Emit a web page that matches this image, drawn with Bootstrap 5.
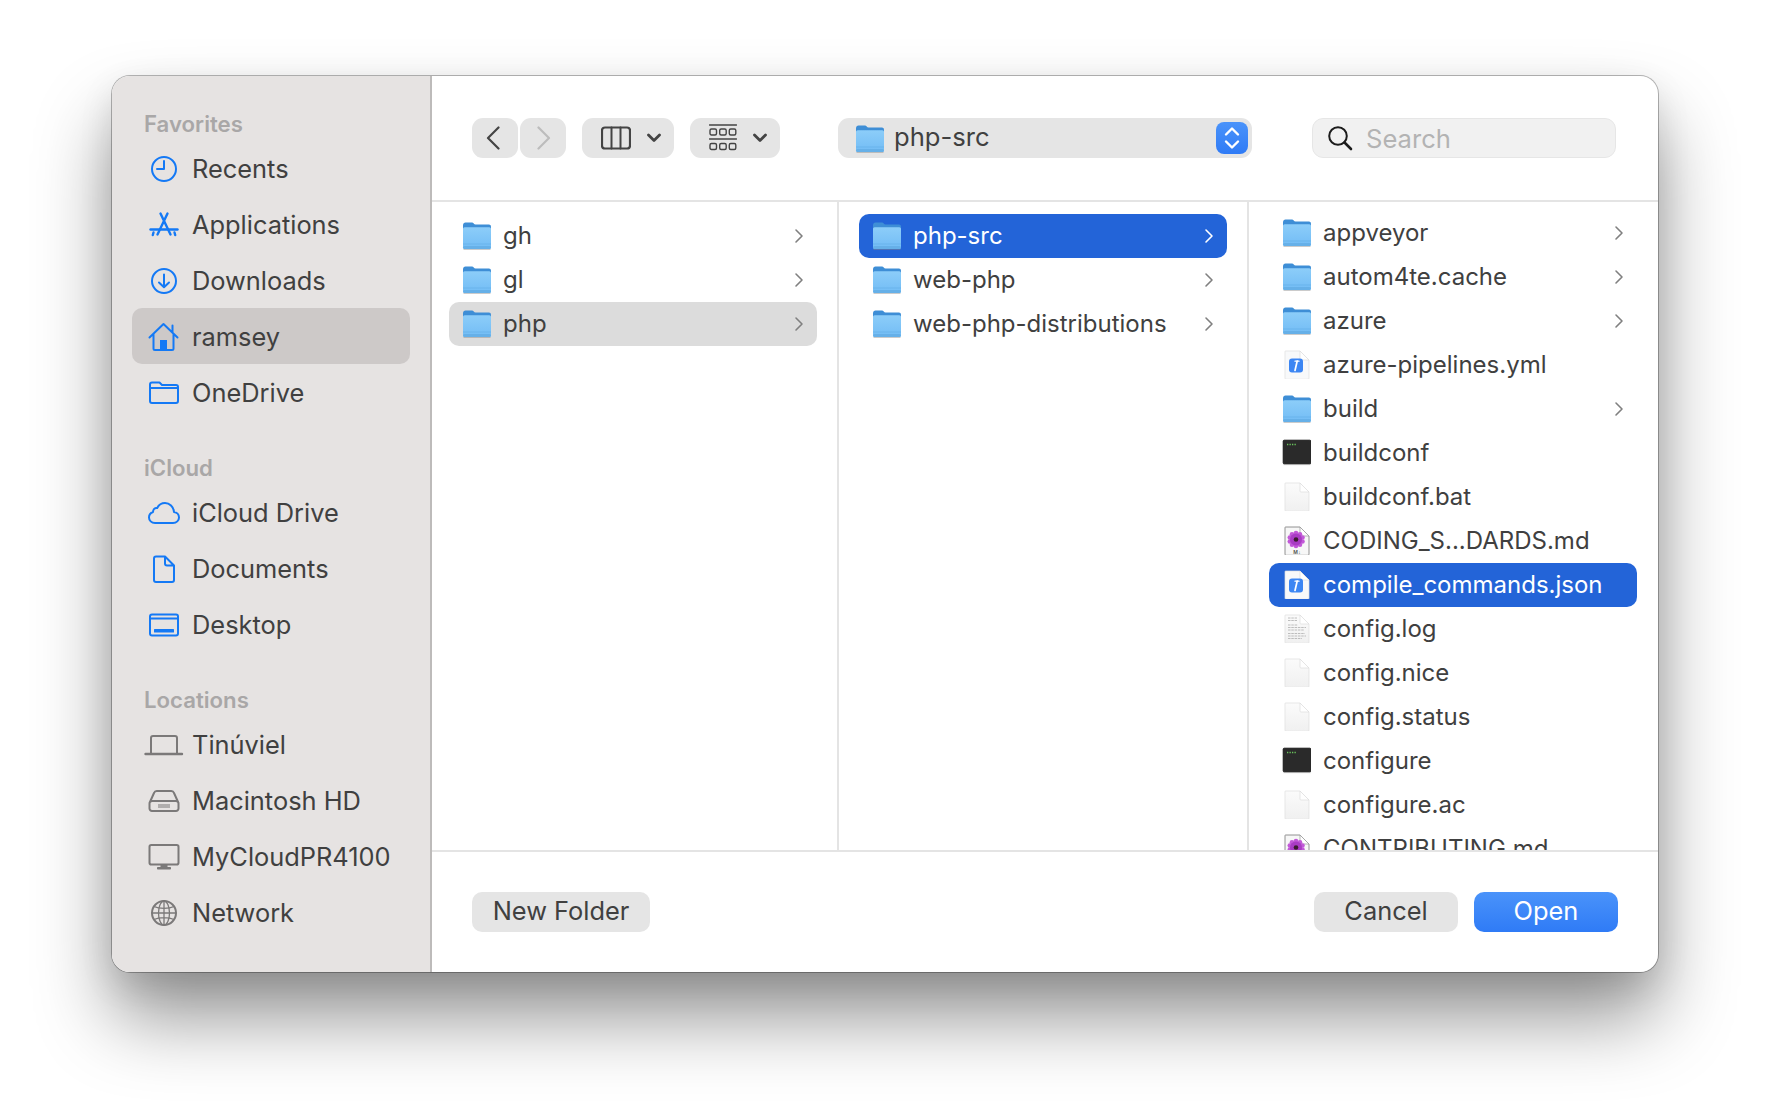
<!DOCTYPE html>
<html lang="en">
<head>
<meta charset="utf-8">
<title>Open dialog</title>
<link href="https://cdn.jsdelivr.net/npm/bootstrap@5.3.0/dist/css/bootstrap.min.css" rel="stylesheet">
<style>
html,body{height:100%;}
body{background:#fff;font-family:Inter,"Liberation Sans",sans-serif;font-size:24px;color:#404040;margin:0;padding:76px 0 0 112px;overflow:hidden;}
.dlg{width:1546px;height:896px;border-radius:18px;overflow:hidden;background:#fff;box-shadow:0 0 0 1px rgba(0,0,0,.28);}
.dlg-wrap{width:1546px;height:896px;border-radius:18px;box-shadow:0 46px 76px rgba(0,0,0,.42),0 12px 34px rgba(0,0,0,.10);}
.side{width:320px;flex:none;background:#e6e3e2;border-right:2px solid #bdbbba;padding:31px 20px 0 20px;font-size:25.4px;}
.side-head{height:34px;line-height:34px;font-size:22.2px;font-weight:600;color:#a9a7a7;padding-left:12px;}
.side-group{margin-bottom:30px;}
.side-item{height:56px;padding:0 0 0 16px;border-radius:10px;}
.side-item.on{background:#cdc9c8;margin-top:-1px;margin-bottom:1px;padding-top:2px;}
.side-item svg{width:32px;height:32px;flex:none;margin:0 12px 0 0;overflow:visible;}
.bl{fill:none;stroke:#1479f5;stroke-width:2;stroke-linecap:round;stroke-linejoin:round;}
.gy{fill:none;stroke:#7b7979;stroke-width:2;stroke-linecap:round;stroke-linejoin:round;}
.blf{fill:#1479f5;}
.gyf{fill:#7b7979;}
.bl.sw24,.gy.sw24{stroke-width:2.4;}
.gy.sw14{stroke-width:1.3;}
.gy.sw1{stroke-width:1;stroke-linecap:butt;}
.bar{height:126px;flex:none;border-bottom:2px solid #e4e4e4;padding:42px 0 0 40px;font-size:25.6px;}
.tbtn{height:40px;background:#e5e5e5;border-radius:11px;flex:none;}
.tbtn svg{flex:none;}
.w46{width:46px;}
.back{padding-right:4px!important;}
.fwd{margin-left:2px;padding-left:2px!important;}
.w92{width:92px;margin-left:16px;padding-left:19px!important;}
.w90{width:90px;margin-left:16px;padding-left:19px!important;}
.pop{width:414px;margin-left:58px;padding-left:17px;padding-right:4px;}
.pop-name{margin-left:10px;margin-bottom:2px;}
.step{width:32px;height:32px;border-radius:8px;background:linear-gradient(#4a93fa,#2f7bf6);margin-left:auto;}
.find{width:304px;height:40px;margin-left:60px;background:#f1f1f1;border:1px solid #e6e6e6;border-radius:11px;padding-left:14px;color:#b3b3b3;}
.find svg{margin-right:13px;flex:none;}
.find span{margin-top:3px;}
.panes{min-height:0;}
.pane{height:100%;overflow:hidden;border-right:2px solid #e4e4e4;flex:none;}
.p1{width:407px;padding:12px 20px 0 17px;}
.p2{width:410px;padding:12px 20px 0 20px;}
.p3{width:409px;padding:9px 21px 0 20px;border-right:0;}
.row-it{height:44px;border-radius:10px;padding:0 13px 1px 13px;white-space:nowrap;}
.row-it .ic{width:29px;height:29px;flex:none;margin-right:12px;overflow:visible;}
.row-it .cv{width:10px;height:16px;flex:none;margin-left:auto;fill:none;stroke:#808080;stroke-width:1.6;stroke-linecap:round;stroke-linejoin:round;}
.row-it.gray{background:#dcdcdc;}
.row-it.sel{background:#2364d8;color:#fff;}
.row-it.sel .cv{stroke:#fff;}
.foot{height:122px;flex:none;border-top:2px solid #e4e4e4;padding:40px 40px 0 40px;}
.fbtn{height:40px;width:144px;border-radius:10px;background:#e5e5e5;color:#404040;font-size:25.4px;line-height:36px;padding-bottom:2px!important;}
.fbtn.wide{width:178px;}
.fbtn.go{background:linear-gradient(#4a93fa,#2f7bf6);color:#fff;margin-left:16px;}
.tick{fill:none;stroke:#444;stroke-width:2.2;stroke-linecap:round;stroke-linejoin:round;}
.tick.off{stroke:#bcbcbc;}
.tick.thin{stroke-width:1.4;}
.tick.mid{stroke-width:2;}
.tick.fat{stroke-width:2.8;}
</style>
</head>
<body>
<svg width="0" height="0" class="position-absolute">
<defs>
<linearGradient id="fb" x1="0" y1="0" x2="0" y2="1"><stop offset="0" stop-color="#8ccdf9"/><stop offset="1" stop-color="#72bcf5"/></linearGradient>
<linearGradient id="pg" x1="0" y1="0" x2="0" y2="1"><stop offset="0" stop-color="#fbfbfb"/><stop offset="1" stop-color="#f0f0f0"/></linearGradient>
<symbol id="folder" viewBox="0 1 29 29">
<path d="M1 5.500C1 3.500 2 2.500 3.500 2.500H10C11.500 2.500 12 4.500 13.500 4.500H27C28 4.500 29 5.200 29 7V14H1Z" fill="#3e8ed6"/>
<path d="M1 9C1 8 1.700 7.300 2.700 7.300H27.300C28.300 7.300 29 8 29 9V26.800C29 28.200 28.200 29 27 29H3C1.800 29 1 28.200 1 26.800Z" fill="url(#fb)"/>
<rect x="1" y="23.500" width="28" height="1" fill="#62aee6" opacity=".6"/>
<rect x="1" y="26" width="28" height="3" rx="1.500" fill="#66b0e8"/>
<rect x="1.500" y="29" width="27" height=".8" fill="#8a8a8a" opacity=".55"/>
</symbol>
<symbol id="page" viewBox="0 -.5 29 29">
<path d="M3.500 .5H18L27 9.500V27.500C27 28.300 26.500 28.800 25.500 28.800H4.500C3.500 28.800 3 28.300 3 27.500V1C3 .7 3.200 .5 3.500 .5Z" fill="url(#pg)" stroke="#dedede" stroke-width=".7"/>
<path d="M18 .5V8.500C18 9.200 18.400 9.500 19 9.500H27Z" fill="#fff" stroke="#dcdcdc" stroke-width=".7"/>
</symbol>
<symbol id="bluefile" viewBox="0 -.5 29 29">
<path d="M3.500 .5H18L27 9.500V27.500C27 28.300 26.500 28.800 25.500 28.800H4.500C3.500 28.800 3 28.300 3 27.500V1C3 .7 3.200 .5 3.500 .5Z" fill="#f8f9fa" stroke="#dedede" stroke-width=".7"/>
<path d="M18 .5V8.500C18 9.200 18.400 9.500 19 9.500H27Z" fill="#fff" stroke="#dcdcdc" stroke-width=".7"/>
<rect x="7" y="8" width="14" height="14" rx="3" fill="#3c86f3"/>
<path d="M15.200 10.500 13 20" stroke="#fff" stroke-width="1.700" fill="none" stroke-linecap="round"/>
<path d="M13 10.700H17" stroke="#fff" stroke-width="1.300" fill="none" stroke-linecap="round"/>
</symbol>
<symbol id="term" viewBox="-.5 -.5 29 29">
<rect x=".7" y="1.700" width="27.600" height="23.600" rx="1" fill="#2a2a2a" stroke="#111" stroke-width=".9"/>
<path d="M4.500 6H5.800M7 6H8.300M9.500 6H10.800M12 6H13.300" stroke="#6ac35c" stroke-width="1.500"/>
<rect x="1" y="25.700" width="27" height=".9" fill="#9a9a9a" opacity=".7"/>
</symbol>
<symbol id="mdfile" viewBox="0 -.5 29 29">
<path d="M3.500 .5H18L27 9.500V27.500C27 28.300 26.500 28.800 25.500 28.800H4.500C3.500 28.800 3 28.300 3 27.500V1C3 .7 3.200 .5 3.500 .5Z" fill="#f7f7f7" stroke="#777" stroke-width=".8"/>
<path d="M18 .5V8.500C18 9.200 18.400 9.500 19 9.500H27Z" fill="#fff" stroke="#999" stroke-width=".7"/>
<g fill="#c258d8">
<circle cx="14" cy="6.500" r="2.300"/><circle cx="18" cy="7.700" r="2.300"/><circle cx="20.500" cy="11" r="2.300"/><circle cx="20.500" cy="15" r="2.300"/><circle cx="18" cy="18.300" r="2.300"/><circle cx="14" cy="19.500" r="2.300"/><circle cx="10" cy="18.300" r="2.300"/><circle cx="7.800" cy="15" r="2.300"/><circle cx="7.800" cy="11" r="2.300"/><circle cx="10" cy="7.700" r="2.300"/>
</g>
<circle cx="14" cy="13" r="6" fill="#a93cc4"/>
<circle cx="14" cy="13" r="2.300" fill="#3b1c2e"/>
<text x="15" y="27" font-family="Liberation Sans,sans-serif" font-size="5.500" font-weight="700" fill="#555" text-anchor="middle">M↓</text>
</symbol>
<symbol id="logfile" viewBox="0 -.5 29 29">
<path d="M3.500 .5H18L27 9.500V27.500C27 28.300 26.500 28.800 25.500 28.800H4.500C3.500 28.800 3 28.300 3 27.500V1C3 .7 3.200 .5 3.500 .5Z" fill="url(#pg)" stroke="#dedede" stroke-width=".7"/>
<path d="M18 .5V8.500C18 9.200 18.400 9.500 19 9.500H27Z" fill="#fff" stroke="#dcdcdc" stroke-width=".7"/>
<path d="M6 3.500H15M6 6H15M6 10.500H16M6 13H24M6 15.500H22M6 19H23M6 21.500H24M6 24H20" stroke="#bdbdbd" stroke-width="1.100" stroke-dasharray="2.500 .8"/>
</symbol>
<symbol id="chev" viewBox="0 0 10 16"><path d="M2 2 8 8 2 14"/></symbol>
</defs>
</svg>

<div class="dlg-wrap">
<div class="dlg d-flex">
  <aside class="side">
    <div class="side-group">
      <div class="side-head">Favorites</div>
      <div class="side-item d-flex align-items-center"><svg viewBox="0 0 32 32"><circle class="bl" cx="16" cy="16" r="12"/><path class="bl" d="M16 8V16H9"/></svg>Recents</div>
      <div class="side-item d-flex align-items-center"><svg viewBox="0 0 32 32"><path class="bl sw24" d="M19.500 4.500 9.500 25.500M12.500 4.500 22.500 25.500"/><path class="bl sw24" d="M2.500 20.500H29.500"/><path class="bl sw24" d="M5.500 23.500 4.800 26M26.500 23.500 27.200 26"/></svg>Applications</div>
      <div class="side-item d-flex align-items-center"><svg viewBox="0 0 32 32"><circle class="bl" cx="16" cy="16" r="12"/><path class="bl" d="M16 9.500V22M11 17.500 16 22.300 21 17.500"/></svg>Downloads</div>
      <div class="side-item on d-flex align-items-center"><svg viewBox="0 0 32 32"><path class="bl" d="M1.500 16.500 15.500 3 29.500 16.500M24.500 4.500V11.500M5.500 13.500V27.500A1.500 1.500 0 0 0 7 29H24A1.500 1.500 0 0 0 25.500 27.500V13.500"/><rect class="blf" x="12" y="19" width="7" height="10"/></svg>ramsey</div>
      <div class="side-item d-flex align-items-center"><svg viewBox="0 0 32 32"><path class="bl" d="M2 8V24A2 2 0 0 0 4 26H28A2 2 0 0 0 30 24V10A2 2 0 0 0 28 8H14L11.500 5.500H4A2 2 0 0 0 2 7.500ZM2 11H30"/></svg>OneDrive</div>
    </div>
    <div class="side-group">
      <div class="side-head">iCloud</div>
      <div class="side-item d-flex align-items-center"><svg viewBox="0 0 32 32"><path class="bl" d="M7 26H25C28.500 26 31 23.500 31 20.500C31 17.500 28.800 15.300 26 15C25.500 9.500 21.500 6 17 6C13.500 6 10.700 8 9.200 11C6.800 10.500 5 12.500 5 15C2.800 15.800 1 17.800 1 20.500C1 23.500 3.500 26 7 26Z"/></svg>iCloud Drive</div>
      <div class="side-item d-flex align-items-center"><svg viewBox="0 0 32 32"><path class="bl" d="M8 3.500H17L26 12.500V27A2 2 0 0 1 24 29H8A2 2 0 0 1 6 27V5.500A2 2 0 0 1 8 3.500ZM17 3.500V10.500A2 2 0 0 0 19 12.500H26"/></svg>Documents</div>
      <div class="side-item d-flex align-items-center"><svg viewBox="0 0 32 32"><rect class="bl" x="2" y="5.500" width="28" height="21" rx="2"/><path class="bl" d="M2 9.500H30"/><rect class="blf" x="6" y="20" width="20" height="3.500" rx=".5"/></svg>Desktop</div>
    </div>
    <div class="side-group">
      <div class="side-head">Locations</div>
      <div class="side-item d-flex align-items-center"><svg viewBox="0 0 32 32"><path class="gy" d="M3 24V9A2 2 0 0 1 5 7H27A2 2 0 0 1 29 9V24"/><path class="gy sw24" d="M-2.500 25H34"/></svg>Tinúviel</div>
      <div class="side-item d-flex align-items-center"><svg viewBox="0 0 32 32"><path class="gy" d="M1.500 18 6 8A3 3 0 0 1 9 6H23A3 3 0 0 1 26 8L30.500 18M4 16H28A2.500 2.500 0 0 1 30.500 18.500V23.500A2.500 2.500 0 0 1 28 26H4A2.500 2.500 0 0 1 1.500 23.500V18.500A2.500 2.500 0 0 1 4 16Z"/><path class="gy sw1" d="M11 19V23M13 19V23M15 19V23M17 19V23M19 19V23M21 19V23"/></svg>Macintosh HD</div>
      <div class="side-item d-flex align-items-center"><svg viewBox="0 0 32 32"><rect class="gy" x="1.500" y="4" width="29" height="19.500" rx="1.800"/><rect class="gyf" x="12.500" y="23.500" width="7" height="3"/><rect class="gyf" x="9" y="26" width="14" height="2.500" rx=".8"/></svg>MyCloudPR4100</div>
      <div class="side-item d-flex align-items-center"><svg viewBox="0 0 32 32"><circle class="gy" cx="16" cy="16" r="12"/><ellipse class="gy sw14" cx="16" cy="16" rx="5.500" ry="12"/><path class="gy sw14" d="M16 4V28M6 9.500C11 12 21 12 26 9.500M4 16H28M6 22.500C11 20 21 20 26 22.500"/></svg>Network</div>
    </div>
  </aside>

  <main class="flex-grow-1 d-flex flex-column">
    <div class="bar d-flex align-items-start">
      <button type="button" class="btn p-0 border-0 tbtn w46 back d-flex align-items-center justify-content-center"><svg width="14" height="24" viewBox="0 0 14 24"><path class="tick" d="M12.500 1.500 2 12 12.500 22.500"/></svg></button>
      <button type="button" class="btn p-0 border-0 tbtn w46 fwd d-flex align-items-center justify-content-center"><svg width="14" height="24" viewBox="0 0 14 24"><path class="tick off" d="M1.500 1.500 12 12 1.500 22.500"/></svg></button>
      <button type="button" class="btn p-0 border-0 tbtn w92 d-flex align-items-center gap-3"><svg width="30" height="24" viewBox="0 0 30 24"><rect class="tick" x="1" y="1.500" width="28" height="21" rx="3"/><path class="tick mid" d="M10.500 1.500V22.500M19.500 1.500V22.500"/></svg><svg width="14" height="10" viewBox="0 0 14 10"><path class="tick fat" d="M1.500 2 7 7.500 12.500 2"/></svg></button>
      <button type="button" class="btn p-0 border-0 tbtn w90 d-flex align-items-center gap-3"><svg width="28" height="28" viewBox="0 0 28 28"><path class="tick thin" d="M.500 1H27.500M.500 15H27.500"/><rect class="tick thin" x="1" y="5" width="6.500" height="6" rx="1.500"/><rect class="tick thin" x="10.700" y="5" width="6.500" height="6" rx="1.500"/><rect class="tick thin" x="20.300" y="5" width="6.500" height="6" rx="1.500"/><rect class="tick thin" x="1" y="19.500" width="6.500" height="6" rx="1.500"/><rect class="tick thin" x="10.700" y="19.500" width="6.500" height="6" rx="1.500"/><rect class="tick thin" x="20.300" y="19.500" width="6.500" height="6" rx="1.500"/></svg><svg width="14" height="10" viewBox="0 0 14 10"><path class="tick fat" d="M1.500 2 7 7.500 12.500 2"/></svg></button>
      <div class="tbtn pop d-flex align-items-center">
        <svg width="29" height="29"><use href="#folder"/></svg>
        <span class="pop-name">php-src</span>
        <span class="step d-flex align-items-center justify-content-center"><svg width="18" height="26" viewBox="0 0 18 26"><path fill="none" stroke="#fff" stroke-width="2.400" stroke-linecap="round" stroke-linejoin="round" d="M3 9.500 9 3.500 15 9.500M3 16.500 9 22.500 15 16.500"/></svg></span>
      </div>
      <div class="find d-flex align-items-center"><svg width="26" height="26" viewBox="0 0 26 26"><circle cx="11" cy="11" r="8.800" fill="none" stroke="#1c1c1c" stroke-width="2"/><path d="M17.500 17.500 24 24" stroke="#1c1c1c" stroke-width="2.600" stroke-linecap="round"/></svg><span>Search</span></div>
    </div>

    <div class="panes flex-grow-1 d-flex">
      <div class="pane p1">
        <div class="row-it d-flex align-items-center"><svg class="ic"><use href="#folder"/></svg>gh<svg class="cv"><use href="#chev"/></svg></div>
        <div class="row-it d-flex align-items-center"><svg class="ic"><use href="#folder"/></svg>gl<svg class="cv"><use href="#chev"/></svg></div>
        <div class="row-it gray d-flex align-items-center"><svg class="ic"><use href="#folder"/></svg>php<svg class="cv"><use href="#chev"/></svg></div>
      </div>
      <div class="pane p2">
        <div class="row-it sel d-flex align-items-center"><svg class="ic"><use href="#folder"/></svg>php-src<svg class="cv"><use href="#chev"/></svg></div>
        <div class="row-it d-flex align-items-center"><svg class="ic"><use href="#folder"/></svg>web-php<svg class="cv"><use href="#chev"/></svg></div>
        <div class="row-it d-flex align-items-center"><svg class="ic"><use href="#folder"/></svg>web-php-distributions<svg class="cv"><use href="#chev"/></svg></div>
      </div>
      <div class="pane p3">
        <div class="row-it d-flex align-items-center"><svg class="ic"><use href="#folder"/></svg>appveyor<svg class="cv"><use href="#chev"/></svg></div>
        <div class="row-it d-flex align-items-center"><svg class="ic"><use href="#folder"/></svg>autom4te.cache<svg class="cv"><use href="#chev"/></svg></div>
        <div class="row-it d-flex align-items-center"><svg class="ic"><use href="#folder"/></svg>azure<svg class="cv"><use href="#chev"/></svg></div>
        <div class="row-it d-flex align-items-center"><svg class="ic"><use href="#bluefile"/></svg>azure-pipelines.yml</div>
        <div class="row-it d-flex align-items-center"><svg class="ic"><use href="#folder"/></svg>build<svg class="cv"><use href="#chev"/></svg></div>
        <div class="row-it d-flex align-items-center"><svg class="ic"><use href="#term"/></svg>buildconf</div>
        <div class="row-it d-flex align-items-center"><svg class="ic"><use href="#page"/></svg>buildconf.bat</div>
        <div class="row-it d-flex align-items-center"><svg class="ic"><use href="#mdfile"/></svg>CODING_S...DARDS.md</div>
        <div class="row-it sel d-flex align-items-center"><svg class="ic"><use href="#bluefile"/></svg>compile_commands.json</div>
        <div class="row-it d-flex align-items-center"><svg class="ic"><use href="#logfile"/></svg>config.log</div>
        <div class="row-it d-flex align-items-center"><svg class="ic"><use href="#page"/></svg>config.nice</div>
        <div class="row-it d-flex align-items-center"><svg class="ic"><use href="#page"/></svg>config.status</div>
        <div class="row-it d-flex align-items-center"><svg class="ic"><use href="#term"/></svg>configure</div>
        <div class="row-it d-flex align-items-center"><svg class="ic"><use href="#page"/></svg>configure.ac</div>
        <div class="row-it d-flex align-items-center"><svg class="ic"><use href="#mdfile"/></svg>CONTRIBUTING.md</div>
      </div>
    </div>

    <div class="foot d-flex align-items-start">
      <button type="button" class="btn p-0 border-0 fbtn wide">New Folder</button>
      <button type="button" class="btn p-0 border-0 fbtn ms-auto">Cancel</button>
      <button type="button" class="btn p-0 border-0 fbtn go">Open</button>
    </div>
  </main>
</div>
</div>
</body>
</html>
